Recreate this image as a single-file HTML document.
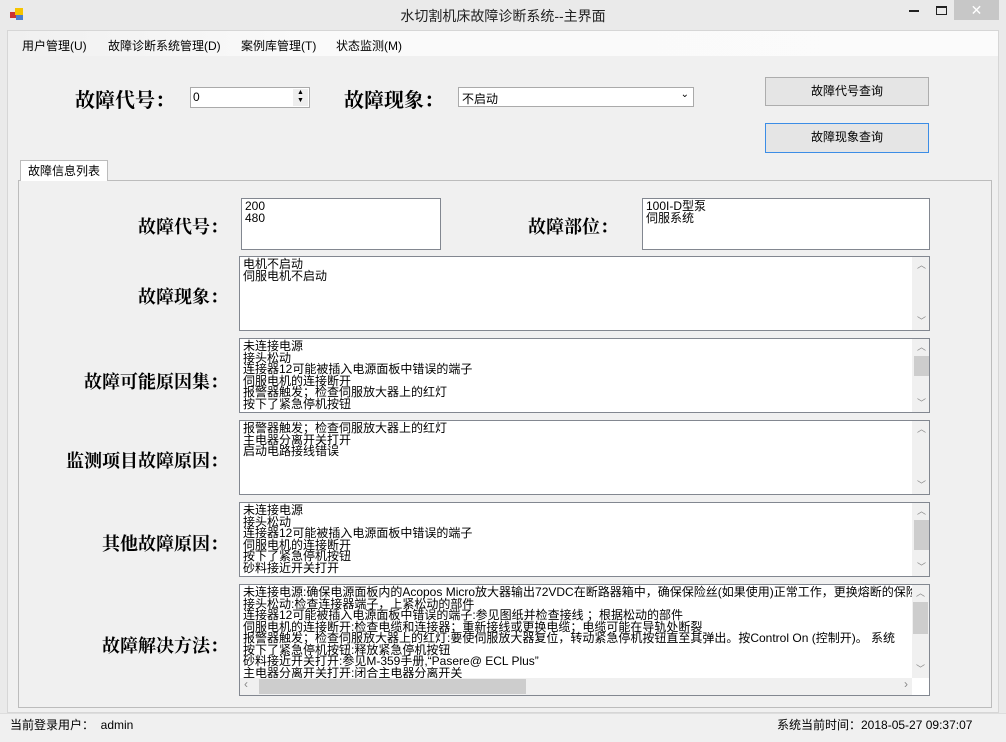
<!DOCTYPE html>
<html><head><meta charset="utf-8"><style>
*{box-sizing:border-box;margin:0;padding:0}
body{width:1006px;height:742px;background:#eaeaea;position:relative;overflow:hidden;font-family:"Liberation Sans","Noto Sans CJK SC",sans-serif;font-size:12px;color:#000}
.a{position:absolute}
.client{left:7px;top:30px;width:992px;height:683px;background:#f0f0f0;border:1px solid #d6d6d6}
.menu{left:8px;top:31px;width:990px;height:25px;background:linear-gradient(to right,#f0f0f0,#fafafa 30%,#fbfbfb)}
.menu span{position:absolute;top:6px;font-size:12px}
.lbl{font-family:"Noto Serif CJK SC","Liberation Serif",serif;font-weight:bold;font-size:18px;white-space:nowrap}
.rl{text-align:right;width:210px;left:18px}
.box{background:#fff;border:1px solid #828790;font-family:"WenQuanYi Zen Hei","Liberation Sans",sans-serif;font-size:12px;line-height:11.5px;padding:2px 3px;overflow:hidden;white-space:nowrap}
.sb{position:absolute;right:0;top:0;bottom:0;width:17px;background:#f0f0f0;border-left:1px solid #f0f0f0}
.sb i{position:absolute;left:1px;width:15px;background:#cdcdcd}
.sb b{position:absolute;left:0;width:17px;text-align:center;font-size:9px;color:#888;font-weight:normal}
.btn{border:1px solid #adadad;background:#e5e5e5;text-align:center;font-size:12px;line-height:26px}
</style></head><body>
<div class="a" style="left:10px;top:8px;width:14px;height:13px">
<div class="a" style="left:0;top:4px;width:6px;height:6px;background:#c33"></div>
<div class="a" style="left:5px;top:0;width:8px;height:7px;background:#f5c400"></div>
<div class="a" style="left:6px;top:7px;width:7px;height:5px;background:#4a7fd0"></div></div>
<div class="a" style="left:0;top:6px;width:1006px;text-align:center;font-size:14px;color:#222">水切割机床故障诊断系统--主界面</div>
<div class="a" style="left:909px;top:10px;width:10px;height:2px;background:#222"></div>
<div class="a" style="left:936px;top:6px;width:11px;height:9px;border:1px solid #222;border-top-width:2px"></div>
<div class="a" style="left:954px;top:0;width:45px;height:20px;background:#c7c7c7;color:#fff;text-align:center;font-size:14px;line-height:20px">✕</div>
<div class="a client"></div>
<div class="a menu">
<span style="left:14px">用户管理(U)</span><span style="left:100px">故障诊断系统管理(D)</span><span style="left:233px">案例库管理(T)</span><span style="left:328px">状态监测(M)</span></div>
<div class="a lbl" style="left:75px;top:84px;font-size:20px">故障代号：</div>
<div class="a" style="left:190px;top:87px;width:120px;height:21px;background:#fff;border:1px solid #aaa;padding:2px 2px;font-size:12px">0
<div class="a" style="right:1px;top:1px;width:15px;height:17px;background:#eee;font-size:7px;line-height:8px;text-align:center">▲<br>▼</div></div>
<div class="a lbl" style="left:344px;top:84px;font-size:20px">故障现象：</div>
<div class="a" style="left:458px;top:87px;width:236px;height:20px;background:#fff;border:1px solid #aaa;padding:2px 3px;font-size:12px">不启动<span class="a" style="right:4px;top:1px;font-size:10px">⌄</span></div>
<div class="a btn" style="left:765px;top:77px;width:164px;height:29px">故障代号查询</div>
<div class="a btn" style="left:765px;top:123px;width:164px;height:30px;border-color:#3c8de6">故障现象查询</div>
<div class="a" style="left:18px;top:180px;width:974px;height:528px;border:1px solid #bcbcbc;background:#f0f0f0"></div>
<div class="a" style="left:20px;top:160px;width:88px;height:21px;background:#fff;border:1px solid #bcbcbc;border-bottom:none;text-align:center;line-height:20px">故障信息列表</div>

<div class="a lbl rl" style="top:213px">故障代号：</div>
<div class="a box" style="left:241px;top:198px;width:200px;height:52px">200<br>480</div>
<div class="a lbl" style="left:528px;top:213px">故障部位：</div>
<div class="a box" style="left:642px;top:198px;width:288px;height:52px">100I-D型泵<br>伺服系统</div>

<div class="a lbl rl" style="top:283px">故障现象：</div>
<div class="a box" style="left:239px;top:256px;width:691px;height:75px">电机不启动<br>伺服电机不启动<div class="sb"><b style="top:3px">︿</b><b style="bottom:3px">﹀</b></div></div>

<div class="a lbl rl" style="top:368px">故障可能原因集：</div>
<div class="a box" style="left:239px;top:338px;width:691px;height:75px">未连接电源<br>接头松动<br>连接器12可能被插入电源面板中错误的端子<br>伺服电机的连接断开<br>报警器触发；检查伺服放大器上的红灯<br>按下了紧急停机按钮<div class="sb"><b style="top:3px">︿</b><i style="top:17px;height:20px"></i><b style="bottom:3px">﹀</b></div></div>

<div class="a lbl rl" style="top:447px">监测项目故障原因：</div>
<div class="a box" style="left:239px;top:420px;width:691px;height:75px">报警器触发；检查伺服放大器上的红灯<br>主电器分离开关打开<br>启动电路接线错误<div class="sb"><b style="top:3px">︿</b><b style="bottom:3px">﹀</b></div></div>

<div class="a lbl rl" style="top:530px">其他故障原因：</div>
<div class="a box" style="left:239px;top:502px;width:691px;height:75px">未连接电源<br>接头松动<br>连接器12可能被插入电源面板中错误的端子<br>伺服电机的连接断开<br>按下了紧急停机按钮<br>砂料接近开关打开<div class="sb"><b style="top:3px">︿</b><i style="top:17px;height:30px"></i><b style="bottom:3px">﹀</b></div></div>

<div class="a lbl rl" style="top:632px">故障解决方法：</div>
<div class="a box" style="left:239px;top:584px;width:691px;height:112px;padding-right:20px">未连接电源:确保电源面板内的Acopos Micro放大器输出72VDC在断路器箱中，确保保险丝(如果使用)正常工作，更换熔断的保险丝<br>接头松动:检查连接器端子，上紧松动的部件<br>连接器12可能被插入电源面板中错误的端子:参见图纸并检查接线 ；根据松动的部件<br>伺服电机的连接断开:检查电缆和连接器；重新接线或更换电缆；电缆可能在导轨处断裂<br>报警器触发；检查伺服放大器上的红灯:要使伺服放大器复位，转动紧急停机按钮直至其弹出。按Control On (控制开)。 系统<br>按下了紧急停机按钮:释放紧急停机按钮<br>砂料接近开关打开:参见M-359手册,“Pasere@ ECL Plus”<br>主电器分离开关打开:闭合主电器分离开关
<div class="a" style="right:0;top:0;width:17px;height:93px;background:#f0f0f0"><b class="a" style="top:3px;left:4px;font-size:9px;color:#888;font-weight:normal">︿</b><i class="a" style="left:1px;top:17px;width:15px;height:32px;background:#cdcdcd"></i><b class="a" style="bottom:3px;left:4px;font-size:9px;color:#888;font-weight:normal">﹀</b></div>
<div class="a" style="left:0;bottom:0;width:672px;height:17px;background:#f0f0f0"><i class="a" style="left:19px;top:1px;width:267px;height:15px;background:#cdcdcd"></i><span class="a" style="left:4px;top:1px;color:#888">‹</span><span class="a" style="right:4px;top:1px;color:#888">›</span></div></div>

<div class="a" style="left:0;top:713px;width:1006px;height:29px;background:#f0f0f0;border-top:1px solid #ddd"></div>
<div class="a" style="left:10px;top:716px;font-size:12px">当前登录用户：&nbsp;&nbsp;admin</div>
<div class="a" style="left:777px;top:716px;font-size:12px">系统当前时间：2018-05-27 09:37:07</div>
</body></html>
